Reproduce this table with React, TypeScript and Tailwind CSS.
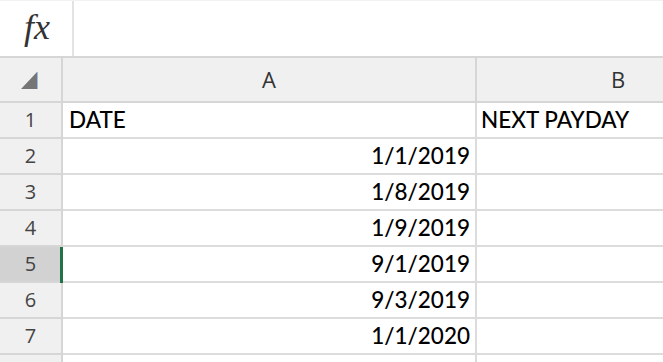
const rows: { n: number; a: string; b: string; align: 'left' | 'right' }[] = [
  { n: 1, a: 'DATE', b: 'NEXT PAYDAY', align: 'left' },
  { n: 2, a: '1/1/2019', b: '', align: 'right' },
  { n: 3, a: '1/8/2019', b: '', align: 'right' },
  { n: 4, a: '1/9/2019', b: '', align: 'right' },
  { n: 5, a: '9/1/2019', b: '', align: 'right' },
  { n: 6, a: '9/3/2019', b: '', align: 'right' },
  { n: 7, a: '1/1/2020', b: '', align: 'right' },
  { n: 8, a: '', b: '', align: 'right' },
];

export default function App() {
  const selectedRow = 5;
  return (
    <div className="w-[663px] h-[362px] overflow-hidden bg-white">
      {/* Formula bar */}
      <div className="flex h-[58px] border-b-2 border-[#d6d6d6] border-t border-t-[#f2f2f2]">
        <div className="w-[74px] border-r-2 border-[#e3e3e3] flex items-center justify-center pl-[2px]">
          <span className="text-[36px] italic text-[#333] leading-none pb-1" style={{ fontFamily: '"Liberation Serif", serif' }}>
            fx
          </span>
        </div>
        <div className="flex-1" />
      </div>

      {/* Sheet */}
      <div className="w-[800px]" style={{ fontFamily: '"Open Sans", sans-serif' }}>
        {/* Column headers */}
        <div className="flex h-[45px] bg-[#f0f0f0] border-b-2 border-[#d6d6d6] text-[22px] text-[#333]">
          <div className="w-[63px] border-r-2 border-[#d6d6d6] flex items-center justify-center">
            <svg width="17" height="18" viewBox="0 0 17 18" className="ml-[-2px] mt-[2px]">
              <polygon points="16,0 16,17 0,17" fill="#767676" />
              <line x1="16.5" y1="0" x2="16.5" y2="17" stroke="#9bbbe0" strokeWidth="1" />
            </svg>
          </div>
          <div className="w-[414px] border-r-2 border-[#d6d6d6] flex items-center justify-center">A</div>
          <div className="w-[284px] border-r-2 border-[#d6d6d6] flex items-center justify-center">B</div>
        </div>

        {/* Rows */}
        {rows.map((r) => (
          <div key={r.n} className="flex h-[36px]">
            <div
              className={
                'w-[63px] border-r-2 border-b-2 border-[#d6d6d6] flex items-center justify-center text-[20px] text-[#444] ' +
                (r.n === selectedRow ? 'bg-[#d2d2d2]' : 'bg-[#f0f0f0]')
              }
            >
              {r.n <= 7 ? r.n : ''}
            </div>
            <div
              className={
                'relative w-[414px] border-r-2 border-b-2 border-[#dcdcdc] flex items-end pb-[2px] pl-[6px] pr-[5px] text-[22.5px] font-medium text-black leading-none ' +
                (r.align === 'right' ? 'justify-end' : 'justify-start')
              }
              style={{ fontFamily: 'Lato, sans-serif' }}
            >
              {r.n === selectedRow && <div className="absolute left-[-3px] top-0 bottom-[-2px] w-[3px] bg-[#217346]" />}
              <span className="pb-[4px]">{r.a}</span>
            </div>
            <div
              className="w-[284px] border-r-2 border-b-2 border-[#dcdcdc] flex items-end pb-[2px] px-[4px] text-[22.5px] font-medium text-black leading-none"
              style={{ fontFamily: 'Lato, sans-serif' }}
            >
              <span className="pb-[4px]">{r.b}</span>
            </div>
          </div>
        ))}
      </div>
    </div>
  );
}
